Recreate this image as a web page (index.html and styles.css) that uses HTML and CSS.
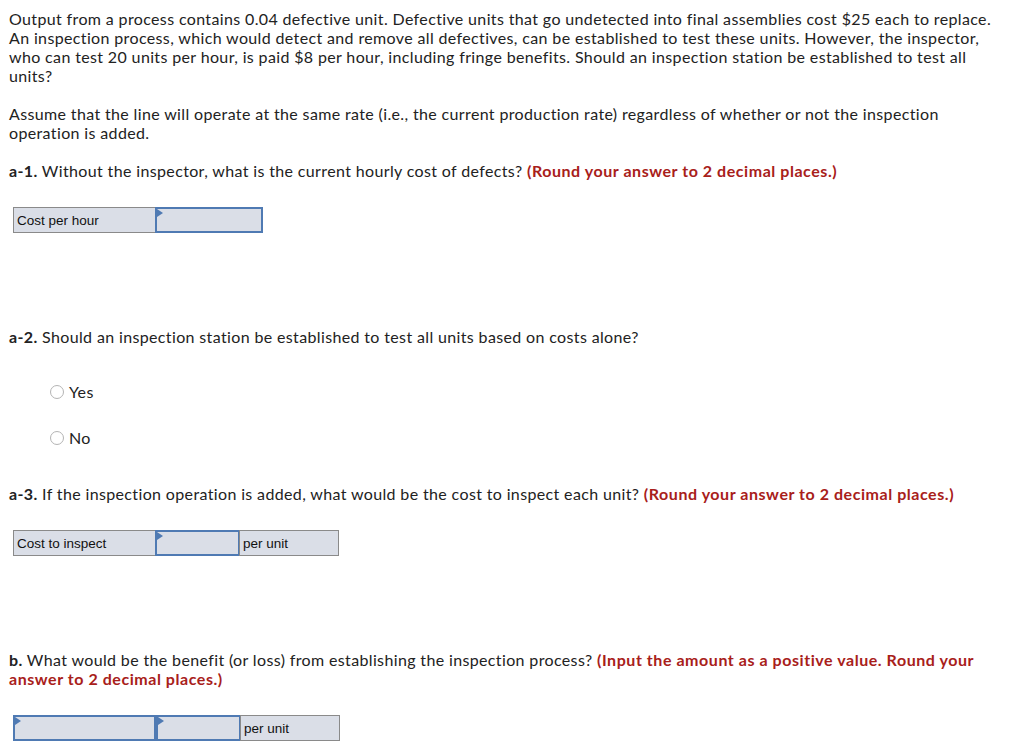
FILE: index.html
```html
<!DOCTYPE html>
<html>
<head>
<meta charset="utf-8">
<link rel="stylesheet" href="styles.css">
</head>
<body>
<div class="page">
  <p class="para">Output from a process contains 0.04 defective unit. Defective units that go undetected into final assemblies cost $25 each to replace. An inspection process, which would detect and remove all defectives, can be established to test these units. However, the inspector, who can test 20 units per hour, is paid $8 per hour, including fringe benefits. Should an inspection station be established to test all units?</p>
  <p class="para">Assume that the line will operate at the same rate (i.e., the current production rate) regardless of whether or not the inspection operation is added.</p>
  <p class="para q"><b>a-1.</b> Without the inspector, what is the current hourly cost of defects? <span class="red">(Round your answer to 2 decimal places.)</span></p>

  <div class="grid g1">
    <div class="cell label">Cost per hour</div>
    <div class="cell input w-in1"><span class="tri"></span></div>
  </div>

  <p class="para q2"><b>a-2.</b> Should an inspection station be established to test all units based on costs alone?</p>

  <div class="radios">
    <label class="radio"><span class="circle"></span>Yes</label>
    <label class="radio"><span class="circle"></span>No</label>
  </div>

  <p class="para q3"><b>a-3.</b> If the inspection operation is added, what would be the cost to inspect each unit? <span class="red">(Round your answer to 2 decimal places.)</span></p>

  <div class="grid g2">
    <div class="cell label">Cost to inspect</div>
    <div class="cell input w-in2"><span class="tri"></span></div>
    <div class="cell label w-unit">per unit</div>
  </div>

  <p class="para q4"><b>b.</b> What would be the benefit (or loss) from establishing the inspection process? <span class="red">(Input the amount as a positive value. Round your answer to 2 decimal places.)</span></p>

  <div class="grid g3">
    <div class="cell input w-lab"><span class="tri"></span></div>
    <div class="cell input w-in2"><span class="tri"></span></div>
    <div class="cell label w-unit">per unit</div>
  </div>
</div>
</body>
</html>
```

FILE: styles.css
```css
* { box-sizing: border-box; }
html, body { margin: 0; padding: 0; background: #fff; }
body {
  font-family: "Lato", "Liberation Sans", sans-serif;
  color: #222;
}
.page {
  padding: 9px 24px 0 9px;
  font-size: 16px;
  letter-spacing: 0.36px;
  line-height: 19px;
}
.para { margin: 0 0 19px 0; }
.para b { font-weight: 700; }
.red { color: #a8201a; font-weight: 700; letter-spacing: 0.55px; }
.q { margin-bottom: 0; }

.grid {
  display: flex;
  margin-left: 4px;
  font-family: "Liberation Sans", Arial, sans-serif;
  font-size: 13.5px;
  letter-spacing: 0;
  color: #111;
}
.g1 { margin-top: 27px; }
.cell {
  height: 26px;
  background: #dadee7;
  position: relative;
  display: flex;
  align-items: center;
  padding-left: 3px;
}
.label {
  width: 143px;
  border: 1px solid #8a8a8a;
}
.label + .input { margin-left: -1px; }
.input {
  border: 2px solid #4f7ab3;
}
.input + .label { margin-left: -1px; }
.w-in1 { width: 108px; }
.w-in2 { width: 85px; }
.w-lab { width: 143px; }
.w-unit { width: 100px; }
.tri {
  position: absolute;
  left: 0;
  top: 0;
  width: 0;
  height: 0;
  border-top: 4px solid transparent;
  border-bottom: 4px solid transparent;
  border-left: 6px solid #4f7ab3;
}

.q2 { margin-top: 94px; margin-bottom: 0; }
.radios {
  display: flex;
  flex-direction: column;
  gap: 27px;
  margin-top: 36px;
  padding-left: 41px;
}
.radio {
  display: flex;
  align-items: center;
  height: 19px;
}
.circle {
  width: 14px;
  height: 14px;
  border: 1px solid #b4b4b4;
  border-radius: 50%;
  margin-right: 5px;
  background: #fff;
}
.q3 { margin-top: 37px; margin-bottom: 0; }
.g2 { margin-top: 27px; }
.q4 { margin-top: 94px; margin-bottom: 0; }
.g3 { margin-top: 27px; }
```
